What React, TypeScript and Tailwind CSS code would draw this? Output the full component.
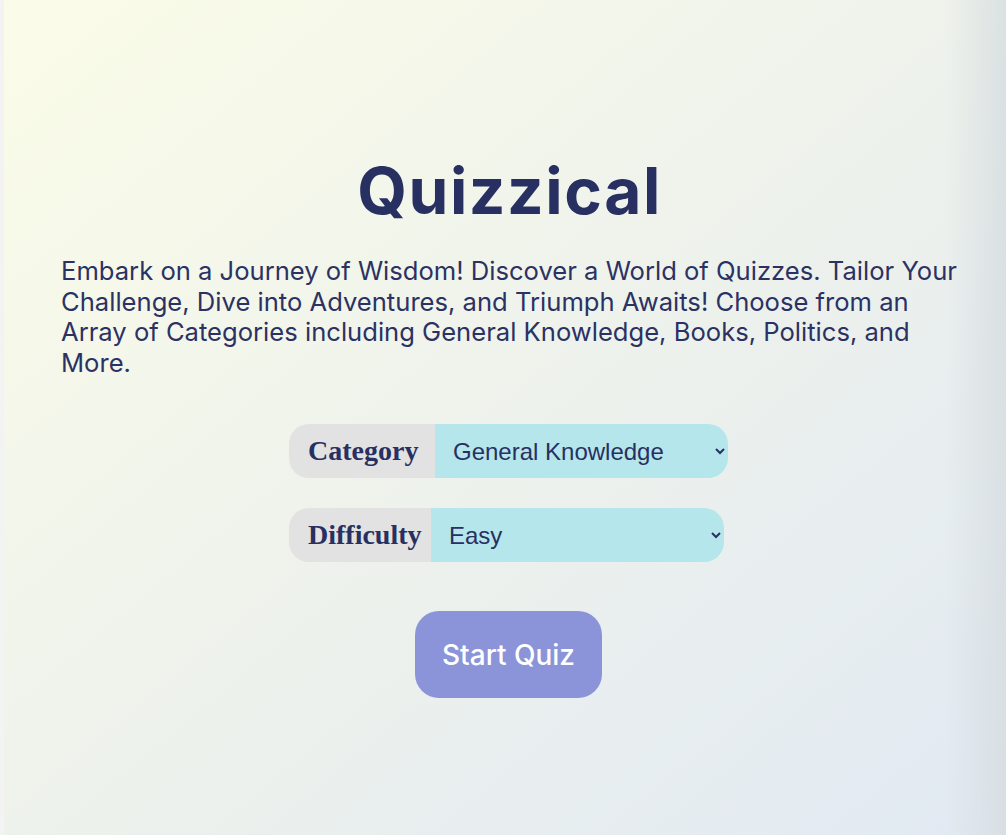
import React from "react"

export default function App() {
  return (
    <div className="flex min-h-[835px] w-full bg-[#f1f1f1]">
      <div className="w-[4px] shrink-0 bg-[#f3f3f3]" />
      <main className="relative flex-1 overflow-hidden bg-gradient-to-br from-[#fbfce8] via-[#eef2ec] to-[#e1e9f3] font-['Inter',sans-serif] text-[#283061]">
        {/* right edge shading */}
        <div className="pointer-events-none absolute inset-y-0 right-0 w-[60px] bg-gradient-to-r from-transparent to-[#d6dcdf]/80" />

        <div className="relative flex flex-col items-center pl-[57px] pr-[40px] pt-[152px]">
          <h1 className="translate-x-[-4px] text-[64px] leading-[78px] font-bold tracking-[0.025em] text-[#283061]">Quizzical</h1>

          <p className="mt-[26px] self-stretch text-[25.6px] leading-[30.5px] text-[#2b3263]">
            Embark on a Journey of Wisdom! Discover a World of Quizzes. Tailor Your Challenge, Dive into Adventures, and Triumph Awaits! Choose from an Array of Categories including General Knowledge, Books, Politics, and More.
          </p>

          <div className="mt-[46px] flex w-[439px] translate-x-[-5px] flex-col items-start gap-[30px]">
            <div className="flex h-[54px] items-stretch">
              <label className="flex w-[146px] items-center rounded-l-[20px] bg-[#e2e2e2] pl-[19px] font-['Liberation_Serif',serif] text-[28px] font-bold text-[#283061]">
                Category
              </label>
              <select className="w-[293px] rounded-r-[20px] bg-[#b5e6eb] pl-[14px] pr-[8px] font-['Liberation_Sans',sans-serif] text-[24px] text-[#283061] outline-none">
                <option>General Knowledge</option>
                <option>Books</option>
                <option>Politics</option>
              </select>
            </div>
            <div className="flex h-[54px] items-stretch">
              <label className="flex w-[142px] items-center rounded-l-[20px] bg-[#e2e2e2] pl-[19px] font-['Liberation_Serif',serif] text-[28px] font-bold text-[#283061]">
                Difficulty
              </label>
              <select className="w-[293px] rounded-r-[20px] bg-[#b5e6eb] pl-[14px] pr-[8px] font-['Liberation_Sans',sans-serif] text-[24px] text-[#283061] outline-none">
                <option>Easy</option>
                <option>Medium</option>
                <option>Hard</option>
              </select>
            </div>
          </div>

          <button className="mt-[49px] h-[87px] w-[187px] translate-x-[-5px] rounded-[24px] bg-[#8b94d8] text-[28px] font-medium text-white">
            Start Quiz
          </button>
        </div>
      </main>
    </div>
  )
}
